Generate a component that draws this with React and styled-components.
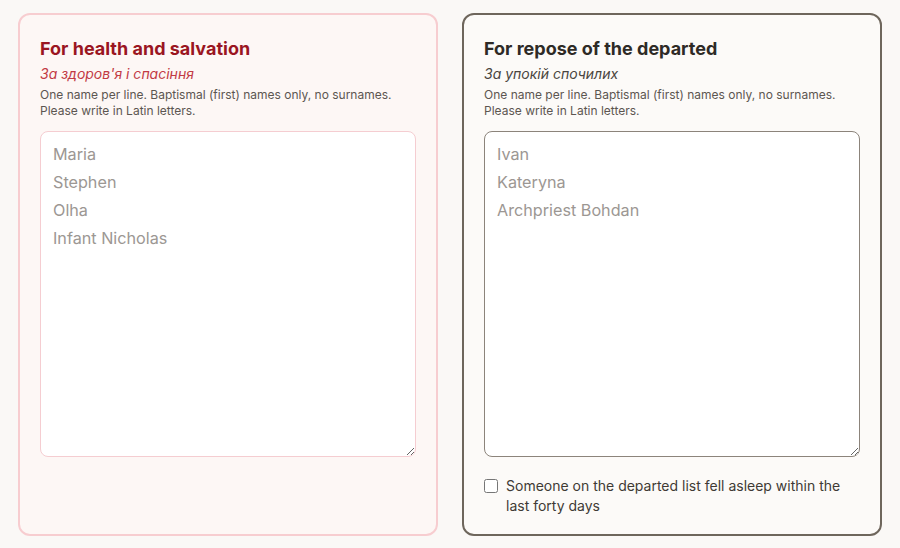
import styled, { createGlobalStyle } from "styled-components";

const GlobalStyle = createGlobalStyle`
  * { box-sizing: border-box; }
  body {
    margin: 0;
    background: #faf8f6;
    font-family: Inter, "Noto Sans", sans-serif;
  }
`;

const themes = {
  health: {
    border: "#f7cdd0",
    bg: "#fdf7f5",
    title: "#9a1521",
    subtitle: "#c23a44",
    field: "#f5cdd1",
  },
  repose: {
    border: "#6e665c",
    bg: "#fcfaf8",
    title: "#2e2a26",
    subtitle: "#4a4540",
    field: "#8c847b",
  },
};

const Page = styled.div`
  display: grid;
  grid-template-columns: 1fr 1fr;
  gap: 24px;
  padding: 13px 18px 12px;
  width: 900px;
  height: 548px;
`;

const Card = styled.section`
  display: flex;
  flex-direction: column;
  border: 2px solid ${({ $kind }) => themes[$kind].border};
  background: ${({ $kind }) => themes[$kind].bg};
  border-radius: 12px;
  padding: 21px 20px 18px;
`;

const Title = styled.h2`
  margin: 0;
  font-size: 18px;
  line-height: 26px;
  font-weight: 700;
  color: ${({ $kind }) => themes[$kind].title};
`;

const Subtitle = styled.p`
  margin: 2px 0 0;
  font-size: 14px;
  line-height: 20px;
  font-style: italic;
  color: ${({ $kind }) => themes[$kind].subtitle};
`;

const Hint = styled.p`
  margin: 3px 0 0;
  font-size: 12px;
  line-height: 16px;
  color: #5c5651;
`;

const Names = styled.textarea`
  display: block;
  margin-top: 12px;
  width: 100%;
  height: 326px;
  padding: 8px 12px;
  border: 1px solid ${({ $kind }) => themes[$kind].field};
  border-radius: 8px;
  background: #fff;
  font-family: Inter, "Noto Sans", sans-serif;
  font-size: 16.2px;
  line-height: 28px;
  color: #2e2a26;
  outline: none;
  &::placeholder {
    color: #9c9793;
  }
`;

const CheckRow = styled.label`
  display: flex;
  align-items: flex-start;
  gap: 8px;
  margin-top: 19px;
  font-size: 14px;
  line-height: 20px;
  color: #3f3a35;
`;

const Box = styled.input`
  margin: 3px 0 0 0;
  width: 14px;
  height: 14px;
  flex-shrink: 0;
`;

const Panel = ({ kind, title, subtitle, placeholder, children }) => (
  <Card $kind={kind}>
    <Title $kind={kind}>{title}</Title>
    <Subtitle $kind={kind}>{subtitle}</Subtitle>
    <Hint>
      One name per line. Baptismal (first) names only, no surnames.
      <br />
      Please write in Latin letters.
    </Hint>
    <Names $kind={kind} placeholder={placeholder} />
    {children}
  </Card>
);

export default function App() {
  return (
    <>
      <GlobalStyle />
      <Page>
        <Panel
          kind="health"
          title="For health and salvation"
          subtitle="За здоров'я і спасіння"
          placeholder={"Maria\nStephen\nOlha\nInfant Nicholas"}
        />
        <Panel
          kind="repose"
          title="For repose of the departed"
          subtitle="За упокій спочилих"
          placeholder={"Ivan\nKateryna\nArchpriest Bohdan"}
        >
          <CheckRow>
            <Box type="checkbox" />
            <span>Someone on the departed list fell asleep within the last forty days</span>
          </CheckRow>
        </Panel>
      </Page>
    </>
  );
}
